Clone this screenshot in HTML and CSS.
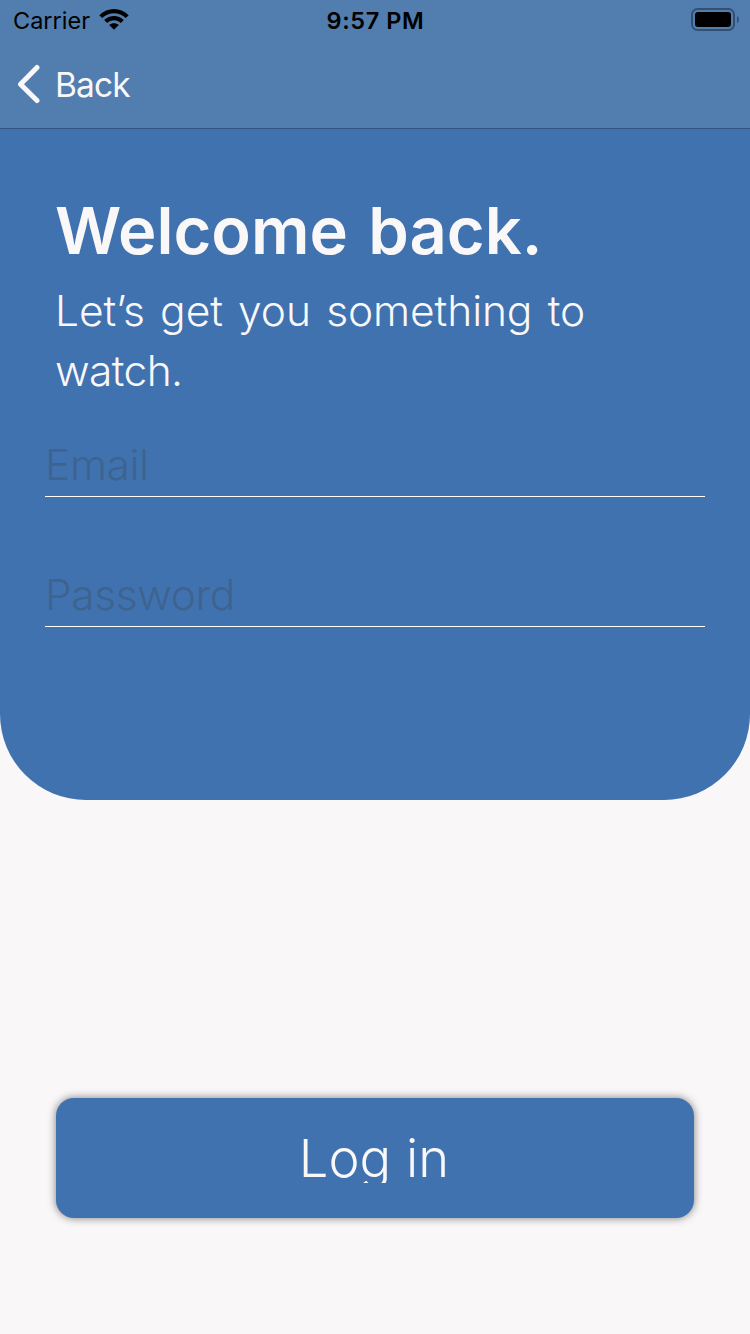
FILE: index.html
```html
<!DOCTYPE html>
<html lang="en">
<head>
<meta charset="utf-8">
<title>Log in</title>
<link rel="stylesheet" href="styles.css">
</head>
<body>
<main class="screen">
  <section class="panel">
    <header class="topbar">
      <div class="status">
        <div class="carrier">
          <span class="carrier-name">Carrier</span>
          <svg class="wifi" width="30" height="22" viewBox="0 0 30 22">
            <path d="M.3 7.200C8.500-1 21.500-1 29.700 7.200L26.800 10.100C20.200 3.600 9.800 3.600 3.200 10.100Z"/>
            <path d="M5.200 12.100C10.700 6.700 19.300 6.700 24.800 12.100L21.800 15C18 11.300 12 11.300 8.200 15Z"/>
            <path d="M10.200 17C12.900 14.500 17.100 14.500 19.800 17L15 21.800Z"/>
          </svg>
        </div>
        <time class="clock">9:57 PM</time>
        <div class="power">
          <svg class="battery" width="48" height="23" viewBox="0 0 48 23">
            <rect class="battery-case" x="1" y="1" width="42" height="21" rx="5.500"/>
            <path class="battery-cap" d="M46 8C48.700 9.500 48.700 13.500 46 15Z"/>
            <rect x="4" y="4" width="36" height="15" rx="3"/>
          </svg>
        </div>
      </div>
      <a class="back">
        <svg class="chevron" width="24" height="40" viewBox="0 0 24 40"><path d="M20 3.500L3.500 20.200L20 36.500"/></svg>
        <span class="back-label">Back</span>
      </a>
    </header>
    <div class="intro">
      <h1 class="title">Welcome back.</h1>
      <p class="subtitle"><span class="line">Let’s get you something to</span> <span class="line line-last">watch.</span></p>
    </div>
    <form class="fields">
      <div class="field"><span class="hint">Email</span></div>
      <div class="field"><span class="hint">Password</span></div>
    </form>
  </section>
  <div class="actions">
    <div class="login"><span class="login-label">Log in</span></div>
  </div>
</main>
</body>
</html>
```
FILE: styles.css
```css
* { box-sizing: border-box; }
body { margin: 0; background: #f9f7f8; font-family: Inter, "Liberation Sans", sans-serif; }
svg { display: block; }
.screen { width: 750px; height: 1334px; display: flex; flex-direction: column; background: #f9f7f8; overflow: hidden; }
.panel { height: 800px; background: #4072af; border-radius: 0 0 86px 86px; overflow: hidden; }
.topbar { height: 129px; background: #517daf; border-bottom: 1px solid #31557f; }
.status { height: 40px; display: grid; grid-template-columns: 1fr auto 1fr; align-items: center; padding: 0 11px 0 13px; font-size: 23.5px; line-height: 40px; color: #000; }
.carrier { display: flex; align-items: center; gap: 9px; }
.carrier-name { padding-top: 1px; letter-spacing: 0; }
.wifi { margin-top: -3px; fill: #000; }
.clock { padding-top: 1px; margin-left: -1px; font-weight: 600; letter-spacing: .6px; }
.power { display: flex; justify-content: flex-end; margin-top: -2px; }
.battery-case { fill: none; stroke: #345071; stroke-width: 2; }
.battery-cap { fill: #345071; }
.back { display: flex; align-items: center; height: 88px; padding-left: 17px; gap: 14px; color: #f9f7f8; font-size: 33.5px; letter-spacing: -.9px; }
.back-label { padding-top: 1px; }
.chevron { fill: none; stroke: #f9f7f8; stroke-width: 5; stroke-linecap: round; stroke-linejoin: round; }
.intro { padding: 62px 40px 0 55px; color: #f9f7f8; }
.title { margin: 0; font-size: 65px; font-weight: 600; line-height: 80px; word-spacing: 4px; white-space: nowrap; }
.subtitle { margin: 10px 0 0; font-size: 42.5px; font-weight: 350; line-height: 60px; }
.line { display: block; white-space: nowrap; letter-spacing: -.1px; word-spacing: 3.500px; }
.line-last { letter-spacing: -.6px; }
.fields { padding: 29px 45px 0; }
.field { height: 67px; margin-bottom: 63px; padding-top: 4px; border-bottom: 1px solid #fff; display: flex; align-items: center; font-size: 42.5px; font-weight: 350; letter-spacing: -.4px; line-height: 60px; color: #3e638f; }
.actions { padding: 298px 56px 0; }
.login { height: 120px; border-radius: 18px; background: #4072af; box-shadow: 0 0 8px rgba(0,0,0,.5); display: flex; justify-content: center; align-items: center; color: #f9f7f8; }
.login-label { height: 50px; margin-left: -2px; overflow: hidden; line-height: 51px; font-size: 52.5px; font-weight: 350; }
```
